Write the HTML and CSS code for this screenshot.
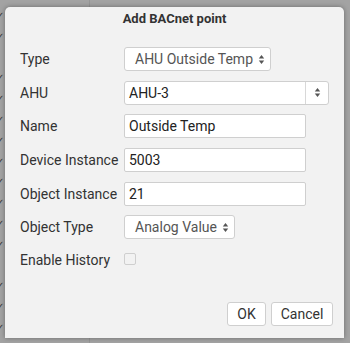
FILE: index.html
```html
<!DOCTYPE html>
<html>
<head>
<meta charset="utf-8">
<link rel="stylesheet" href="styles.css">
</head>
<body>
<div class="backdrop">
  <div class="ticks">
    <span>✓</span><span>✓</span><span class="skip">✓</span><span>✓</span><span>✓</span><span>✓</span><span>✓</span><span>✓</span><span>✓</span><span>✓</span><span>✓</span><span>✓</span><span class="skip">✓</span><span>✓</span><span>✓</span><span>✓</span>
  </div>
</div>
<div class="dialog">
  <div class="title">Add BACnet point</div>
  <div class="form">
    <div class="label">Type</div>
    <div class="ctl"><div class="select sel-type"><span>AHU Outside Temp</span><svg class="arr" width="7" height="11" viewBox="0 0 7 11"><path d="M3.5 1 L6.2 4.5 H0.8 Z M3.5 10 L6.2 6.5 H0.8 Z" fill="#555"/></svg></div></div>

    <div class="label">AHU</div>
    <div class="ctl"><div class="combo"><div class="combo-text">AHU-3</div><div class="combo-btn"><svg width="7" height="11" viewBox="0 0 7 11"><path d="M3.5 1 L6.2 4.5 H0.8 Z M3.5 10 L6.2 6.5 H0.8 Z" fill="#555"/></svg></div></div></div>

    <div class="label">Name</div>
    <div class="ctl"><div class="input">Outside Temp</div></div>

    <div class="label">Device Instance</div>
    <div class="ctl"><div class="input">5003</div></div>

    <div class="label">Object Instance</div>
    <div class="ctl"><div class="input">21</div></div>

    <div class="label">Object Type</div>
    <div class="ctl"><div class="select sel-obj"><span>Analog Value</span><svg class="arr" width="7" height="11" viewBox="0 0 7 11"><path d="M3.5 1 L6.2 4.5 H0.8 Z M3.5 10 L6.2 6.5 H0.8 Z" fill="#555"/></svg></div></div>

    <div class="label last">Enable History</div>
    <div class="ctl last"><div class="checkbox"></div></div>
  </div>
  <div class="buttons">
    <div class="btn btn-ok">OK</div>
    <div class="btn btn-cancel">Cancel</div>
  </div>
</div>
</body>
</html>
```
FILE: styles.css
```css
html, body {
  margin: 0;
  padding: 0;
}
body {
  width: 350px;
  height: 343px;
  overflow: hidden;
  position: relative;
  background: #a3a3a3;
  font-family: Roboto, "Noto Sans", sans-serif;
}
.backdrop {
  position: absolute;
  left: 0;
  top: 0;
  width: 350px;
  height: 343px;
  background: linear-gradient(to right, transparent 89px, #969696 89px, #969696 90px, transparent 90px);
}
.ticks {
  position: absolute;
  left: -4px;
  top: 6px;
  display: flex;
  flex-direction: column;
  font-size: 10px;
  line-height: 20.8px;
  color: #3a3a3a;
}
.ticks .skip {
  visibility: hidden;
}
.dialog {
  position: absolute;
  left: 5px;
  top: 7px;
  width: 339px;
  height: 331px;
  background: #f2f2f2;
  border-radius: 5px 5px 0 0;
  box-shadow: 0 0 5px rgba(0, 0, 0, 0.35);
  display: flex;
  flex-direction: column;
}
.title {
  padding-top: 4px;
  height: 16px;
  line-height: 16px;
  text-align: center;
  font-weight: bold;
  font-size: 13px;
  color: #333;
}
.form {
  margin-top: 20px;
  padding-left: 15px;
  display: grid;
  grid-template-columns: 104px 1fr;
  grid-auto-rows: 24px;
  row-gap: 9.67px;
}
.label {
  font-size: 14px;
  color: #333;
  display: flex;
  align-items: center;
  height: 24px;
}
.label.last {
  height: 22px;
}
.ctl {
  display: flex;
  align-items: center;
  height: 24px;
}
.ctl.last {
  height: 20px;
}
.select {
  box-sizing: border-box;
  height: 24px;
  background: #fff;
  border: 1px solid #cfcfcf;
  border-radius: 3px;
  display: flex;
  align-items: center;
  justify-content: space-between;
  padding: 0 5px 0 10px;
  font-size: 14px;
  color: #555;
}
.sel-type {
  width: 147px;
}
.sel-obj {
  width: 111px;
}
.combo {
  box-sizing: border-box;
  width: 205px;
  height: 24px;
  display: flex;
  background: #fff;
  border: 1px solid #cfcfcf;
  border-radius: 3px;
}
.combo-text {
  flex: 1;
  display: flex;
  align-items: center;
  padding-left: 4px;
  font-size: 14px;
  color: #222;
}
.combo-btn {
  width: 22px;
  border-left: 1px solid #d8d8d8;
  display: flex;
  align-items: center;
  justify-content: center;
}
.input {
  box-sizing: border-box;
  width: 182px;
  height: 24px;
  background: #fff;
  border: 1px solid #cfcfcf;
  border-radius: 2px;
  display: flex;
  align-items: center;
  padding-left: 4px;
  font-size: 14px;
  color: #222;
}
.checkbox {
  box-sizing: border-box;
  width: 12px;
  height: 12px;
  border: 1px solid #cfcfcf;
  border-radius: 2px;
  background: #f2f2f2;
}
.buttons {
  margin-top: auto;
  margin-bottom: 12px;
  padding-right: 11px;
  display: flex;
  justify-content: flex-end;
  gap: 5px;
}
.btn {
  box-sizing: border-box;
  height: 24px;
  background: #fff;
  border: 1px solid #cfcfcf;
  border-radius: 3px;
  display: flex;
  align-items: center;
  justify-content: center;
  font-size: 14px;
  color: #333;
}
.btn-ok {
  width: 39px;
}
.btn-cancel {
  width: 62px;
}
```
